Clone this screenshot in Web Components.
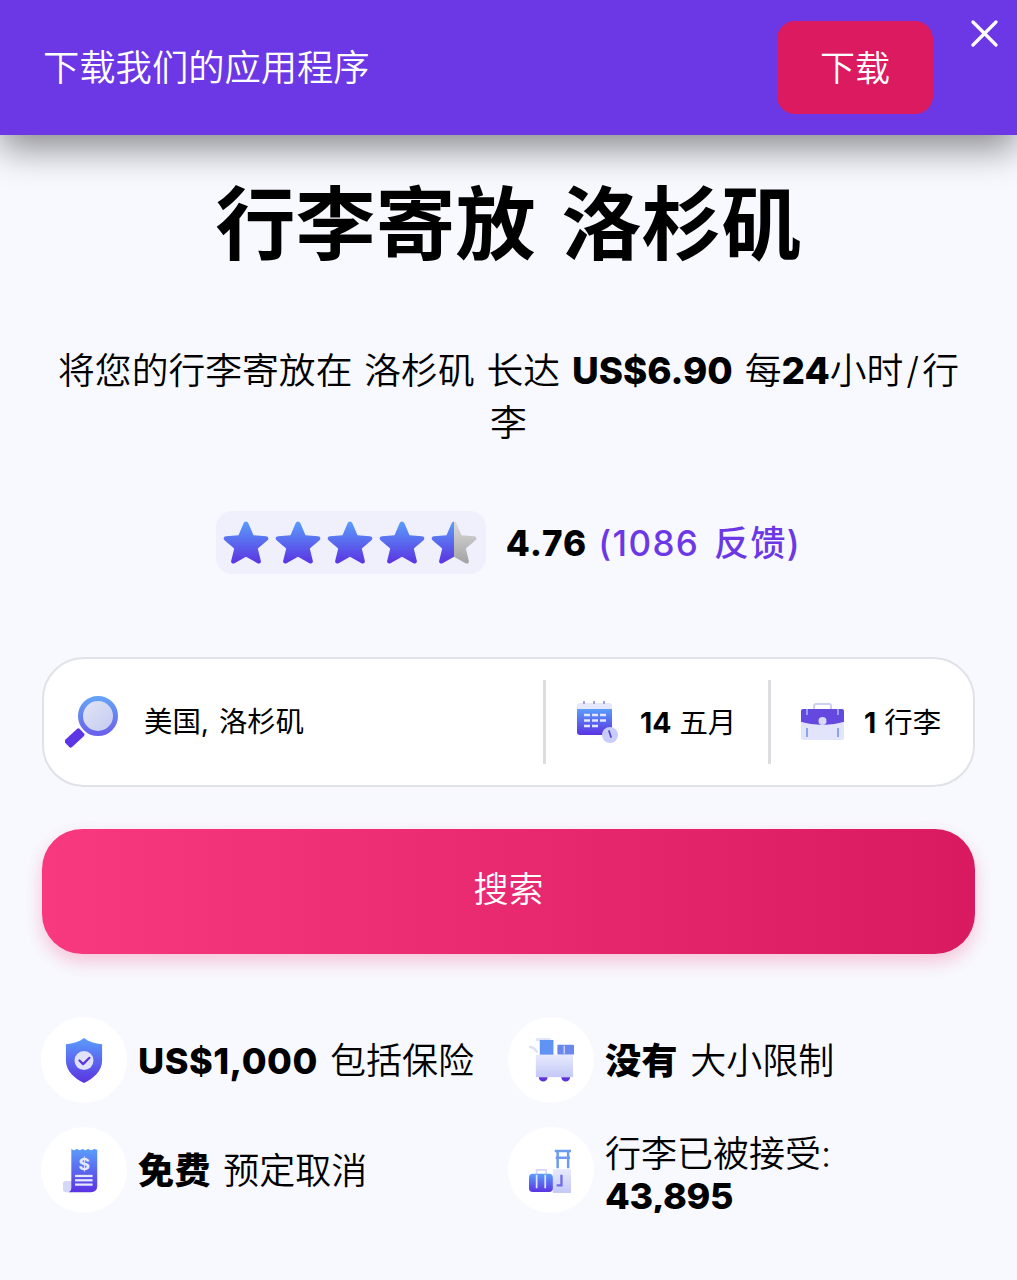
<!DOCTYPE html>
<html lang="zh">
<head>
<meta charset="utf-8">
<title>行李寄放 洛杉矶</title>
<style>
  html, body { margin: 0; background: #f8f9ff; }
  body {
    font-family: Inter, "Noto Sans CJK SC", sans-serif;
    color: #000;
    overflow-x: hidden;
  }
</style>
</head>
<body>
<app-banner></app-banner>
<hero-intro>
  <span slot="title">行李寄放 洛杉矶</span>
  将您的行李寄放在 洛杉矶 长达 <b>US$6.90</b> 每<b>24</b>小时<span style="padding: 0 3px">/</span>行<br>李
</hero-intro>
<rating-bar score="4.76" label="(1086 反馈)"></rating-bar>
<search-form></search-form>
<feature-list>
  <feature-item icon="shield"><b>US$1,000</b> 包括保险</feature-item>
  <feature-item icon="cart"><b>没有</b> 大小限制</feature-item>
  <feature-item icon="receipt"><b>免费</b> 预定取消</feature-item>
  <feature-item icon="bags" style="--shift: 5px">行李已被接受:<br><b style="letter-spacing: -.4px">43,895</b></feature-item>
</feature-list>

<script>
  (function app(customElements) {
    'use strict';

    // shared gradients, each svg needs its own copy because of the shadow scope
    const defs = `
      <defs>
        <linearGradient id="blue" x1="0" y1="0" x2="0" y2="1">
          <stop offset="0" stop-color="#5a9dfb"/><stop offset="1" stop-color="#5b33e2"/>
        </linearGradient>
        <linearGradient id="pale" x1="0" y1="0" x2="0" y2="1">
          <stop offset="0" stop-color="#e8eafb"/><stop offset="1" stop-color="#c3c8f8"/>
        </linearGradient>
        <linearGradient id="grey" x1="0" y1="0" x2="0" y2="1">
          <stop offset="0" stop-color="#dcdcdc"/><stop offset="1" stop-color="#a2a2a2"/>
        </linearGradient>
      </defs>`;

    const icons = {
      shield: `<svg width="38" height="49" viewBox="0 0 42 52">${defs}
        <path d="M21 1 C26 5 33 7 41 8 V26 C41 38 31 46 21 51 C11 46 1 38 1 26 V8 C9 7 16 5 21 1Z" fill="url(#blue)"/>
        <circle cx="21" cy="26" r="10.500" fill="#dfe2f8"/>
        <path d="M16 26 l4 4 l7 -7" fill="none" stroke="#5b33e2" stroke-width="2.400" stroke-linecap="round" stroke-linejoin="round"/>
      </svg>`,
      receipt: `<svg width="37" height="45" viewBox="0 0 40 52" preserveAspectRatio="none" style="margin-right: 5px">${defs}
        <rect x="0" y="38" width="12" height="13" rx="3" fill="#d4d8f6"/>
        <path d="M9 1 q3 3 6 0 q3 3 6 0 q3 3 6 0 q3 3 7 0 q1 1 3 1 V44 q0 7 -7 7 H6 q3 -1 3 -5Z" fill="url(#blue)"/>
        <text x="23" y="26" text-anchor="middle" font-family="Inter, sans-serif" font-size="19" font-weight="700" fill="#e6e8fb">$</text>
        <rect x="13" y="31" width="19" height="2.600" fill="#e6e8fb"/>
        <rect x="13" y="36" width="19" height="2.600" fill="#e6e8fb"/>
        <rect x="13" y="41" width="19" height="2.600" fill="#e6e8fb"/>
      </svg>`,
      cart: `<svg width="45" height="45" viewBox="0 0 46 46">${defs}
        <path d="M0 9 q5 0 8 5" fill="none" stroke="#dcdff6" stroke-width="2.400" stroke-linecap="round"/>
        <rect x="7" y="0" width="15" height="3" fill="#e3e5f9"/>
        <rect x="11" y="2" width="14" height="16" fill="#5f93f4"/>
        <rect x="29" y="7" width="17" height="10" rx="1" fill="#6a88ec"/>
        <path d="M36 8 v8" stroke="#dfe3fb" stroke-width="1.200"/>
        <rect x="7" y="17" width="38" height="23" fill="url(#pale)"/>
        <path d="M10 40 h9 a4.500 4.500 0 0 1 -9 0Z M33 40 h9 a4.500 4.500 0 0 1 -9 0Z" fill="#5b33d8"/>
      </svg>`,
      bags: `<svg width="42" height="44" viewBox="0 0 44 46" style="margin-right: 2px; margin-top: 2px">${defs}
        <rect x="25" y="21" width="19" height="25" fill="url(#pale)"/>
        <path d="M27 2 H44 M30 2 V20 M41 2 V20 M28 9 H43" stroke="#6d9bef" stroke-width="2.600" fill="none"/>
        <path d="M34 27 V38 H29" stroke="#6d6ce8" stroke-width="2.400" fill="none"/>
        <path d="M8 27 V22 H18 V27" fill="none" stroke="#d6daf7" stroke-width="2"/>
        <rect x="0" y="26" width="25" height="19" rx="4" fill="url(#blue)"/>
        <path d="M8 27 V41 M17 27 V41" stroke="#dfe3fb" stroke-width="1.800"/>
      </svg>`
    };

    class AppBanner extends HTMLElement {
      constructor() {
        super();
        const shadowRoot = this.attachShadow({mode: 'open'});
        shadowRoot.innerHTML = `
          <style>
            :host {
              display: flex;
              align-items: center;
              height: 135px;
              padding: 0 19px 0 43px;
              background: #6c38e6;
              color: #fff;
              box-shadow: 0 14px 34px rgba(0, 0, 0, .44);
              position: relative;
            }
            span { font-size: 36.300px; font-weight: 350; flex: 1; padding-bottom: 5px; }
            button {
              width: 156px;
              height: 93px;
              border: 0;
              border-radius: 18px;
              background: #dc1a60;
              color: #fff;
              font: inherit;
              font-size: 35px;
              font-weight: 350;
              margin-right: 38px;
              padding: 0 0 5px;
            }
            svg { align-self: flex-start; margin-top: 20px; }
          </style>
          <span>下载我们的应用程序</span>
          <button>下载</button>
          <svg width="27" height="27" viewBox="0 0 27 27">
            <path d="M2 2 L25 25 M25 2 L2 25" stroke="#fff" stroke-width="3.200" stroke-linecap="round"/>
          </svg>
        `;
      }
    }

    class HeroIntro extends HTMLElement {
      constructor() {
        super();
        const shadowRoot = this.attachShadow({mode: 'open'});
        shadowRoot.innerHTML = `
          <style>
            :host {
              display: block;
              text-align: center;
              padding: 0 42px;
            }
            h1 {
              margin: 0;
              padding-top: 37px;
              font-size: 80px;
              line-height: 104px;
              font-weight: 700;
              word-spacing: 7px;
            }
            p {
              margin: 0;
              padding-top: 69px;
              font-size: 36.800px;
              line-height: 52px;
              font-weight: 350;
              word-spacing: 1.500px;
            }
            ::slotted(b) { font-weight: 800; }
          </style>
          <h1><slot name="title"></slot></h1>
          <p><slot></slot></p>
        `;
      }
    }

    class RatingBar extends HTMLElement {
      constructor() {
        super();
        const shadowRoot = this.attachShadow({mode: 'open'});
        const star = 'M23 1.500 C24 1.500 25 2.300 25.500 3.500 L30.500 15.200 L43 16.300 C45.500 16.600 46 18.800 44.500 20.200 L34.800 28.600 L37.800 40.800 C38.300 43 36.200 44.300 34.500 43.200 L23 36.800 L11.500 43.200 C9.800 44.300 7.700 43 8.200 40.800 L11.200 28.600 L1.500 20.200 C0 18.800 .5 16.600 3 16.300 L15.500 15.200 L20.500 3.500 C21 2.300 22 1.500 23 1.500Z';
        const full = `<svg width="46" height="45" viewBox="0 0 46 45">${defs}<path d="${star}" fill="url(#blue)"/></svg>`;
        const part = `<svg width="46" height="45" viewBox="0 0 46 45">${defs}
          <clipPath id="left"><rect width="23" height="45"/></clipPath>
          <clipPath id="right"><rect x="23" width="23" height="45"/></clipPath>
          <path d="${star}" fill="url(#grey)" clip-path="url(#right)"/>
          <path d="${star}" fill="url(#blue)" clip-path="url(#left)"/>
        </svg>`;
        shadowRoot.innerHTML = `
          <style>
            :host {
              display: flex;
              align-items: center;
              justify-content: center;
              gap: 20px;
              margin-top: 62px;
            }
            .stars {
              display: flex;
              align-items: center;
              gap: 6px;
              height: 63px;
              padding: 0 9px 0 7px;
              border-radius: 16px;
              background: #eff0fb;
            }
            svg { display: block; }
            .text { font-size: 35px; white-space: pre; padding-bottom: 4px; }
            b { font-weight: 800; letter-spacing: 1px; }
            span { color: #6c38e6; font-weight: 500; letter-spacing: 1.400px; word-spacing: 4px; margin-left: 11px; }
          </style>
          <div class="stars">${full.repeat(4)}${part}</div>
          <div class="text"><b>${this.getAttribute('score')}</b><span>${this.getAttribute('label')}</span></div>
        `;
      }
    }

    class SearchForm extends HTMLElement {
      constructor() {
        super();
        const shadowRoot = this.attachShadow({mode: 'open'});
        shadowRoot.innerHTML = `
          <style>
            :host { display: block; padding: 0 42px; margin-top: 83px; }
            .box {
              display: flex;
              align-items: center;
              height: 126px;
              border: 2px solid #e0e2e8;
              border-radius: 42px;
              background: #fff;
              font-size: 28.400px;
              font-weight: 400;
            }
            .cell { display: flex; align-items: center; height: 84px; }
            .cell span { padding-bottom: 4px; }
            .place { flex: 1; padding-left: 21px; gap: 25px; word-spacing: 2px; }
            .place span { padding-bottom: 6px; }
            .date { width: 225px; border-left: 3px solid #dcdde0; padding-left: 31px; gap: 21px; box-sizing: border-box; }
            .bags { width: 205px; border-left: 3px solid #dcdde0; padding-left: 30px; gap: 20px; box-sizing: border-box; }
            b { font-weight: 700; }
            svg { display: block; flex: none; }
            .search {
              display: block;
              width: 100%;
              height: 125px;
              margin-top: 42px;
              padding: 0 0 10px;
              border: 0;
              border-radius: 40px;
              background: linear-gradient(90deg, #f8397f, #d91a60);
              box-shadow: 0 8px 18px rgba(240, 60, 120, .28);
              color: #fff;
              font: inherit;
              font-size: 35px;
              font-weight: 350;
            }
          </style>
          <div class="box">
            <div class="cell place">
              <svg width="54" height="52" viewBox="0 0 54 52">${defs}
                <defs>
                  <linearGradient id="lens" x1="0" y1="0" x2="1" y2="1">
                    <stop offset="0" stop-color="#e3e6f6"/><stop offset="1" stop-color="#c3c9f0"/>
                  </linearGradient>
                  <linearGradient id="ring" x1="0" y1="0" x2="0" y2="1">
                    <stop offset="0" stop-color="#64a2f8"/><stop offset="1" stop-color="#6a62ea"/>
                  </linearGradient>
                </defs>
                <rect x="-5" y="-10" width="10" height="20" rx="2" transform="translate(9.500 42) rotate(47)" fill="#5e35e4"/>
                <circle cx="33" cy="20" r="17.500" fill="url(#lens)" stroke="url(#ring)" stroke-width="5"/>
              </svg>
              <span>美国, 洛杉矶</span>
            </div>
            <div class="cell date">
              <svg width="42" height="42" viewBox="0 0 42 42">${defs}
                <path d="M3 2 H32 Q35 2 35 5 V8 H0 V5 Q0 2 3 2Z" fill="#e5e7fa"/>
                <path d="M7 0 v3 M17 0 v3 M27 0 v3" stroke="#8d8fd8" stroke-width="1.600"/>
                <path d="M0 8 H35 V32 Q35 34 33 34 H3 Q0 34 0 31Z" fill="url(#blue)"/>
                <path d="M7 14 h6 M15 14 h6 M23 14 h6 M7 19.500 h6 M15 19.500 h6 M23 19.500 h6 M7 25 h6 M15 25 h6" stroke="#e4e6fb" stroke-width="2.600"/>
                <circle cx="33" cy="34" r="8" fill="#c7ccf8"/>
                <path d="M32 30 L34 36" stroke="#5b47c8" stroke-width="1.800" stroke-linecap="round"/>
              </svg>
              <span><b>14</b> 五月</span>
            </div>
            <div class="cell bags">
              <svg width="43" height="38" viewBox="0 0 43 38">${defs}
                <path d="M13 6 V3 Q13 1 15 1 H28 Q30 1 30 3 V6" fill="none" stroke="#cdd0f2" stroke-width="2"/>
                <path d="M0 20 H43 V35 Q43 37 41 37 H2 Q0 37 0 35Z" fill="#e2e4fb"/>
                <path d="M2 6 H41 Q43 6 43 8 V19 Q32 22 21.500 22 Q11 22 0 19 V8 Q0 6 2 6Z" fill="#6548e0"/>
                <circle cx="21.500" cy="18" r="4" fill="#d5d9fa"/>
                <path d="M6 6 V12 M37 6 V12 M6 25 V34 M37 25 V34" stroke="#8fa3ea" stroke-width="2"/>
              </svg>
              <span><b>1</b> 行李</span>
            </div>
          </div>
          <button class="search">搜索</button>
        `;
      }
    }

    class FeatureList extends HTMLElement {
      constructor() {
        super();
        const shadowRoot = this.attachShadow({mode: 'open'});
        shadowRoot.innerHTML = `
          <style>
            :host {
              display: grid;
              grid-template-columns: 467px 1fr;
              row-gap: 24px;
              padding: 0 41px;
              margin-top: 63px;
            }
          </style>
          <slot></slot>
        `;
      }
    }

    class FeatureItem extends HTMLElement {
      constructor() {
        super();
        const shadowRoot = this.attachShadow({mode: 'open'});
        shadowRoot.innerHTML = `
          <style>
            :host {
              display: flex;
              align-items: center;
              gap: 11px;
              font-size: 36px;
              font-weight: 350;
              line-height: 42px;
              word-spacing: 2px;
            }
            .round {
              display: flex;
              align-items: center;
              justify-content: center;
              flex: none;
              width: 86px;
              height: 86px;
              border-radius: 50%;
              background: #fff;
            }
            /* nudges the label down without growing the row */
            .label { margin-top: var(--shift, 1px); margin-bottom: calc(-1 * var(--shift, 1px)); }
            ::slotted(b) { font-weight: 800; letter-spacing: .5px; }
          </style>
          <div class="round">${icons[this.getAttribute('icon')]}</div>
          <div class="label"><slot></slot></div>
        `;
      }
    }

    customElements.define('app-banner', AppBanner);
    customElements.define('hero-intro', HeroIntro);
    customElements.define('rating-bar', RatingBar);
    customElements.define('search-form', SearchForm);
    customElements.define('feature-list', FeatureList);
    customElements.define('feature-item', FeatureItem);
  })(window.customElements);
</script>
</body>
</html>
